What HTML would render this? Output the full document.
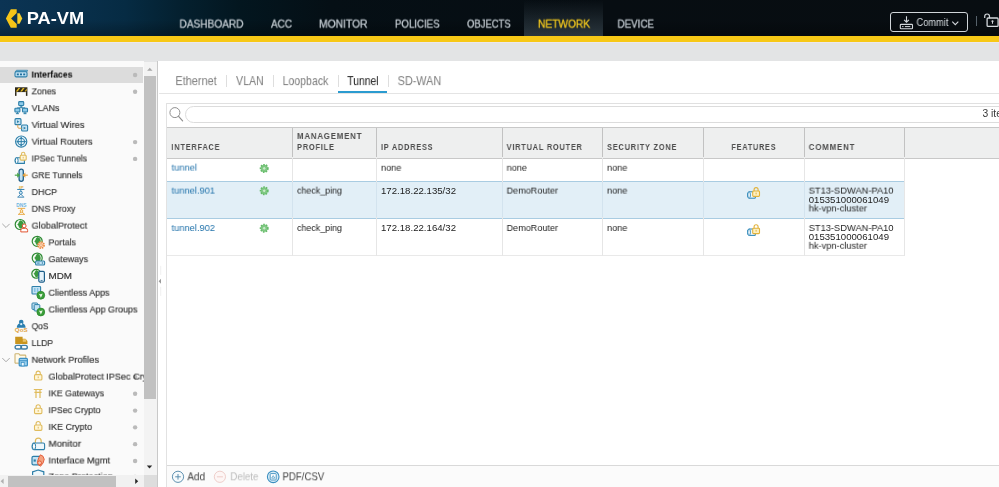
<!DOCTYPE html>
<html lang="en">
<head>
<meta charset="utf-8">
<title>PA-VM</title>
<style>
html,body{margin:0;padding:0;}
body{width:999px;height:487px;overflow:hidden;position:relative;background:#fff;font-family:"Liberation Sans",sans-serif;}
.abs{position:absolute;}
.t{will-change:transform;position:absolute;white-space:nowrap;transform-origin:0 0;}
#hdr{left:0;top:0;width:999px;height:36px;background:#070d12;overflow:hidden;}
#hdr .g{left:0;top:0;width:999px;height:36px;background:linear-gradient(180deg,rgba(0,0,0,0) 0%,rgba(0,0,0,0) 55%,rgba(0,0,0,.28) 100%),linear-gradient(90deg,#0b3454 0px,#09304c 70px,#062b43 125px,#04202f 180px,#03161f 240px,#050f15 330px,#070d12 600px,#080d11 999px);}
#ybar{left:0;top:36px;width:999px;height:6px;background:#f7c816;}
#gband{left:0;top:42px;width:999px;height:20px;background:#e3e4e5;}
#side{left:0;top:61.1px;width:144px;height:414.5px;background:#fafafa;overflow:hidden;}
#main{left:157.2px;top:61.1px;width:842px;height:426px;background:#fff;border-left:1px solid #c9c9c9;}
</style>
</head>
<body>
<div id="hdr" class="abs"><div class="g abs"></div>
<div class="abs" style="left:524px;top:0;width:79px;height:36px;background:linear-gradient(180deg,rgba(60,75,84,0) 0%,rgba(60,75,84,0.25) 40%,rgba(64,80,90,0.62) 100%)"></div>
<div class="abs" style="left:890.2px;top:12.4px;width:75.4px;height:17.2px;border:1.4px solid #d0d5d9;border-radius:3px"></div><div class="abs" style="left:976.4px;top:15.6px;width:1px;height:10.6px;background:#56616a"></div><svg class="abs" style="left:0;top:0" width="999" height="36" viewBox="0 0 999 36"><g transform="translate(5 8)"><path d="M5.8 1.2h5.9v3.9l-5.6 5.4l5.6 5.4v3.9h-5.9l-4.9-9.3z" fill="#f5c518"/><path d="M12.3 5.3h2.3l2.7 5.2l-2.7 5.3h-2.3z" fill="#f7d02c"/></g>
<g transform="translate(899.5 15.6)"><path d="M7 .6v5.8M4.6 4.2l2.4 2.4l2.4-2.4" fill="none" stroke="#d4d8dc" stroke-width="1.1"/><rect x=".8" y="8.8" width="12.2" height="4.4" rx=".8" fill="none" stroke="#d4d8dc" stroke-width="1.1"/><path d="M2.6 11h1.4M5.4 11h5.4" stroke="#d4d8dc" stroke-width="1"/></g>
<g transform="translate(951.5 20.6)"><path d="M.8 1l3 3l3-3" fill="none" stroke="#d4d8dc" stroke-width="1.1"/></g>
<g transform="translate(983.5 12.6)"><path d="M1.2 5.4v-1.6a2.4 2.4 0 0 1 4.8 0v1.8" fill="none" stroke="#d4d8dc" stroke-width="1.2"/><rect x="3.6" y="5.4" width="11" height="8.4" rx="1" fill="none" stroke="#d4d8dc" stroke-width="1.3"/><path d="M9 7.6a1 1 0 0 1 .5 1.9v1.7h-1v-1.7a1 1 0 0 1 .5-1.9z" fill="#d4d8dc"/></g></svg>
</div>
<div id="ybar" class="abs"></div>
<div id="gband" class="abs"></div>
<div class="abs" style="left:0;top:42px;width:999px;height:1.3px;background:#ebe7ee"></div>
<div id="side" class="abs">
<div class="abs" style="left:0;top:5.5px;width:143px;height:16.2px;background:#dcdcdc"></div>
</div>
<div class="abs" style="left:0;top:0;width:143.5px;height:475.4px;overflow:hidden">
<svg class="abs" style="left:0;top:0" width="143.5" height="475.4" viewBox="0 0 143.5 475.4"><g transform="translate(14.2 67.5)"><path d="M2.2 2.8h11.2l-.8 1.6h-11.6z" fill="#9fd0ea" stroke="#2d7fa9" stroke-width=".8"/><rect x=".8" y="4.2" width="12" height="5.2" rx="1.2" fill="#c3e2f3" stroke="#2d7fa9" stroke-width="1.1"/><rect x="2.6" y="6" width="2" height="1.8" fill="#1f6f9f"/><rect x="5.8" y="6" width="2" height="1.8" fill="#1f6f9f"/><rect x="9" y="6" width="2" height="1.8" fill="#1f6f9f"/></g>
<circle cx="135.1" cy="75.00" r="2.2" fill="#bababa"/>
<g transform="translate(14.2 84.28)"><rect x=".8" y="3" width="12.4" height="4.8" fill="#2f2a1c"/><path d="M1.6 7.2l2.6-3.6h1.8l-2.6 3.6zM6 7.2l2.6-3.6h1.8l-2.6 3.6zM10.4 7.2l2.2-3v2l-.8 1z" fill="#e3b822"/><rect x=".8" y="7.8" width="1.5" height="3.8" fill="#2f2a1c"/><rect x="11.7" y="7.8" width="1.5" height="3.8" fill="#2f2a1c"/></g>
<circle cx="135.1" cy="91.78" r="2.2" fill="#bababa"/>
<g transform="translate(14.2 101.06)"><rect x="4.5" y="0.6" width="5" height="3.8" rx=".8" fill="#8ecbea" stroke="#2d7fa9" stroke-width="1.1"/><path d="M5.5 6.0h3M7.0 4.3999999999999995v1.6" stroke="#2d7fa9" stroke-width="1"/><rect x="0.7" y="7.2" width="5" height="3.8" rx=".8" fill="#8ecbea" stroke="#2d7fa9" stroke-width="1.1"/><path d="M1.7 12.600000000000001h3M3.2 11.0v1.6" stroke="#2d7fa9" stroke-width="1"/><rect x="8.3" y="7.2" width="5" height="3.8" rx=".8" fill="#8ecbea" stroke="#2d7fa9" stroke-width="1.1"/><path d="M9.3 12.600000000000001h3M10.8 11.0v1.6" stroke="#2d7fa9" stroke-width="1"/><path d="M7 6v1.2M3.2 7.2V6.6h7.6v.6" fill="none" stroke="#2d7fa9" stroke-width=".7"/></g>
<g transform="translate(14.2 117.84)"><rect x=".8" y=".8" width="6" height="6" rx="1" fill="#c3e2f3" stroke="#2d7fa9" stroke-width="1.1"/><path d="M2.8 2.4l2.4 1.4l-2.4 1.4z" fill="#2d7fa9"/><rect x="7.4" y="7.2" width="6" height="6" rx="1" fill="#c3e2f3" stroke="#2d7fa9" stroke-width="1.1"/><path d="M9.4 8.8l2.4 1.4l-2.4 1.4z" fill="#2d7fa9"/><path d="M3.6 6.8v2.4a1.2 1.2 0 0 0 1.2 1.2h2.6" fill="none" stroke="#dda14a" stroke-width="1"/></g>
<g transform="translate(14.2 134.62)"><circle cx="7" cy="7" r="5.6" fill="#e6f3fa" stroke="#2d7fa9" stroke-width="1.2"/><circle cx="7" cy="7" r="3.4" fill="none" stroke="#2d7fa9" stroke-width=".9"/><path d="M7 2.6v8.8M2.6 7h8.8" stroke="#2d7fa9" stroke-width="1"/><path d="M7 2.2l1.4 1.9h-2.8zM7 11.8l1.4-1.9h-2.8zM2.2 7l1.9-1.4v2.8zM11.8 7l-1.9-1.4v2.8z" fill="#2d7fa9"/></g>
<circle cx="135.1" cy="142.12" r="2.2" fill="#bababa"/>
<g transform="translate(14.2 151.4)"><path d="M2.4 6.4h7.8v5.6h-7.8a1.5 2.8 0 0 1 0-5.6z" fill="#e6f3fa" stroke="#2d7fa9" stroke-width="1.1"/><ellipse cx="2.5" cy="9.2" rx="1.4" ry="2.8" fill="#fff" stroke="#2d7fa9" stroke-width="1"/><path d="M7.3 3.9v-1.3a1.7 1.7 0 0 1 3.4 0v1.3" fill="none" stroke="#e0bc5e" stroke-width="1.1"/><rect x="6" y="3.9" width="6" height="4.8" rx=".9" fill="#fff6d8" stroke="#e0bc5e" stroke-width="1.1"/><rect x="8.5" y="5.4" width="1" height="1.7" fill="#e0bc5e"/></g>
<circle cx="135.1" cy="158.90" r="2.2" fill="#bababa"/>
<g transform="translate(14.2 168.18)"><rect x="4.9" y=".9" width="4.2" height="12.2" rx="2.1" fill="#bfe0f2" stroke="#1f5d86" stroke-width="1.3"/><path d="M.6 7h4" stroke="#4aa54c" stroke-width="1.2"/><path d="M6 7l-3-2.6v5.2z" fill="#4aa54c"/><path d="M13.6 7h-3.6" stroke="#e9a440" stroke-width="1.2"/><path d="M8.2 7l3-2.6v5.2z" fill="#e9a440"/></g>
<g transform="translate(14.2 184.96)"><text x="4.9" y="3.6" font-family="Liberation Sans, sans-serif" font-size="4.2" font-weight="700" fill="#e3ad3c" textLength="4.4" lengthAdjust="spacingAndGlyphs">IP</text><path d="M3 4.5h7.2M6.6 4.5v1.8M3.2 12.2h6.8M4 11.8l2.6-2.6l2.6 2.6" fill="none" stroke="#3b86b4" stroke-width="1"/><circle cx="6.6" cy="7.8" r="1.5" fill="#d6ebf7" stroke="#3b86b4" stroke-width="1"/></g>
<g transform="translate(14.2 201.74)"><text x="2" y="5" font-family="Liberation Sans, sans-serif" font-size="4.6" font-weight="700" fill="#6fb4de" textLength="10.2" lengthAdjust="spacingAndGlyphs">DNS</text><path d="M3.6 6.6h7.4M7.3 6.6v1.6M3.8 12.6h7M4.6 12.2l2.7-2.4l2.7 2.4" fill="none" stroke="#e9ab45" stroke-width="1"/><circle cx="7.3" cy="9.2" r="1.3" fill="#fdf0d2" stroke="#e9ab45" stroke-width="1"/></g>
<g transform="translate(14.2 218.52)"><circle cx="6" cy="6" r="5" fill="#f4fbf2" stroke="#2f8a35" stroke-width="1.2"/><path d="M6.5 1.75a4.5 4.5 0 0 1 0 8.5c-2.5 -1.0 -1.5 -3.5 -3.75 -4.25c2.25 -0.75 1.25 -3.25 3.75 -4.25z" fill="#3b9a3f"/><circle cx="10" cy="7.4" r="1.9" fill="#fff" stroke="#e2522f" stroke-width="1"/><path d="M6.6 13.4v-1.6a2 2 0 0 1 2-2h2.8a2 2 0 0 1 2 2v1.6z" fill="#fff" stroke="#e2522f" stroke-width="1"/></g>
<g transform="translate(31.2 235.3)"><circle cx="6" cy="6" r="5" fill="#f4fbf2" stroke="#2f8a35" stroke-width="1.2"/><path d="M6.5 1.75a4.5 4.5 0 0 1 0 8.5c-2.5 -1.0 -1.5 -3.5 -3.75 -4.25c2.25 -0.75 1.25 -3.25 3.75 -4.25z" fill="#3b9a3f"/><circle cx="9.8" cy="9.8" r="3.1" fill="#fbd3bd" stroke="#ec8a3a" stroke-width="1.6" stroke-dasharray="1.5 .9"/><circle cx="9.8" cy="9.8" r="1.3" fill="#fff" stroke="#ec8a3a" stroke-width=".8"/></g>
<g transform="translate(31.2 252.08)"><circle cx="6" cy="6" r="5" fill="#f4fbf2" stroke="#2f8a35" stroke-width="1.2"/><path d="M6.5 1.75a4.5 4.5 0 0 1 0 8.5c-2.5 -1.0 -1.5 -3.5 -3.75 -4.25c2.25 -0.75 1.25 -3.25 3.75 -4.25z" fill="#3b9a3f"/><rect x="4.4" y="9" width="9" height="4" rx="1" fill="#c3e2f3" stroke="#2d7fa9" stroke-width="1.1"/><path d="M6 11h2.4" stroke="#2d7fa9" stroke-width="1"/><circle cx="11.2" cy="11" r=".7" fill="#2d7fa9"/></g>
<g transform="translate(31.2 268.86)"><circle cx="5" cy="5" r="4.4" fill="#f4fbf2" stroke="#2f8a35" stroke-width="1.2"/><path d="M5.44 1.2599999999999998a3.9600000000000004 3.9600000000000004 0 0 1 0 7.48c-2.2 -0.8800000000000001 -1.32 -3.08 -3.3000000000000003 -3.74c1.9800000000000002 -0.66 1.1 -2.8600000000000003 3.3000000000000003 -3.74z" fill="#3b9a3f"/><rect x="7.6" y="2.6" width="5.6" height="10.6" rx="1.2" fill="#e6f3fa" stroke="#1d5f8a" stroke-width="1.2"/><path d="M9.4 11.6h2" stroke="#1d5f8a" stroke-width=".8"/></g>
<g transform="translate(31.2 285.64)"><rect x=".8" y=".8" width="8.6" height="7.6" rx=".8" fill="#c3e2f3" stroke="#2d7fa9" stroke-width="1.1"/><path d="M3.6 2.4v4M6.4 2.4v4" stroke="#7fbfe3" stroke-width="1.4"/><circle cx="9.6" cy="9.6" r="3.9" fill="#3a9e3a" stroke="#2c8a2c" stroke-width=".8"/><path d="M7.6 8.2l2 .4l1.8-.8l-.6 2l-1.2 2.2l-.8-2z" fill="#eaf7e6"/></g>
<g transform="translate(31.2 302.42)"><rect x=".8" y=".6" width="5.6" height="6.4" rx=".8" fill="#c3e2f3" stroke="#2d7fa9" stroke-width="1"/><rect x="3" y="2.2" width="5.6" height="6.4" rx=".8" fill="#c3e2f3" stroke="#2d7fa9" stroke-width="1"/><circle cx="9.6" cy="9.6" r="3.9" fill="#3a9e3a" stroke="#2c8a2c" stroke-width=".8"/><path d="M7.6 8.2l2 .4l1.8-.8l-.6 2l-1.2 2.2l-.8-2z" fill="#eaf7e6"/></g>
<g transform="translate(14.2 319.2)"><circle cx="7" cy="2.8" r="2.3" fill="#2a7fb0"/><path d="M2.6 8.6c0-3.4 2-4.6 4.4-4.6s4.4 1.2 4.4 4.6z" fill="#2a7fb0"/><circle cx="7" cy="5" r="1.1" fill="#d8edf8"/><text x=".6" y="12.4" font-family="Liberation Sans, sans-serif" font-size="5.6" font-weight="700" fill="#e0a447" textLength="12.8" lengthAdjust="spacingAndGlyphs">QoS</text></g>
<g transform="translate(14.2 335.98)"><path d="M1 .8h7.4v2h2.8l2 2.2v3h-12.2z" fill="#c9951f"/><rect x="8.6" y="3.2" width="3.4" height="2.6" fill="#e9c46a"/><rect x=".9" y="9.4" width="6.4" height="3.6" rx="1.8" fill="none" stroke="#3f7fa6" stroke-width="1.4"/><rect x="6.7" y="9.4" width="6.4" height="3.6" rx="1.8" fill="none" stroke="#3f7fa6" stroke-width="1.4"/></g>
<g transform="translate(14.2 352.76)"><path d="M.8 10.4v-8.6a.8 .8 0 0 1 .8-.8h3l1.2 1.4h5a.8 .8 0 0 1 .8.8v2" fill="#fffaea" stroke="#cdb472" stroke-width="1.1"/><path d="M.8 10.4h4" stroke="#cdb472" stroke-width="1.1"/><rect x="5" y="5.6" width="8.2" height="7.6" rx="1" fill="#9ad0ee" stroke="#3a8fc4" stroke-width="1.2"/><path d="M5 8h8.2" stroke="#3a8fc4" stroke-width="1"/><rect x="7" y="9.6" width="3" height="3.6" fill="#eef8fd" stroke="#3a8fc4" stroke-width=".8"/></g>
<g transform="translate(31.2 369.54)"><path d="M4.9 5.1000000000000005v-1.4a2.1 2.1 0 0 1 4.2 0v1.4" fill="none" stroke="#e0bc5e" stroke-width="1.1"/><rect x="3.3" y="5.1000000000000005" width="7.4" height="5.4" rx="1" fill="#fff6d8" stroke="#e0bc5e" stroke-width="1.1"/><rect x="6.5" y="6.9" width="1" height="1.8" fill="#e0bc5e"/></g>
<circle cx="135.1" cy="377.04" r="2.2" fill="#bababa"/>
<g transform="translate(31.2 386.32)"><path d="M2.6 3.2h8.4M3.2 6h7.2M4.8 3.2v8.4M8.8 3.2v8.4" fill="none" stroke="#e0bc5e" stroke-width="1.2"/></g>
<circle cx="135.1" cy="393.82" r="2.2" fill="#bababa"/>
<g transform="translate(31.2 403.1)"><path d="M4.9 5.1000000000000005v-1.4a2.1 2.1 0 0 1 4.2 0v1.4" fill="none" stroke="#e0bc5e" stroke-width="1.1"/><rect x="3.3" y="5.1000000000000005" width="7.4" height="5.4" rx="1" fill="#fff6d8" stroke="#e0bc5e" stroke-width="1.1"/><rect x="6.5" y="6.9" width="1" height="1.8" fill="#e0bc5e"/></g>
<circle cx="135.1" cy="410.60" r="2.2" fill="#bababa"/>
<g transform="translate(31.2 419.88)"><path d="M4.9 5.1000000000000005v-1.4a2.1 2.1 0 0 1 4.2 0v1.4" fill="none" stroke="#e0bc5e" stroke-width="1.1"/><rect x="3.3" y="5.1000000000000005" width="7.4" height="5.4" rx="1" fill="#fff6d8" stroke="#e0bc5e" stroke-width="1.1"/><rect x="6.5" y="6.9" width="1" height="1.8" fill="#e0bc5e"/></g>
<circle cx="135.1" cy="427.38" r="2.2" fill="#bababa"/>
<g transform="translate(31.2 436.66)"><path d="M4.2 6.4v-2a2.9 2.9 0 0 1 5.8 0v2" fill="none" stroke="#e0bc5e" stroke-width="1.2"/><path d="M2.6 6.4h9.4a1.4 1.4 0 0 1 1.4 1.4v3.8a1.4 1.4 0 0 1-1.4 1.4h-9.4a1.7 3.3 0 0 1 0-6.6z" fill="#eef7fc" stroke="#2d7fa9" stroke-width="1.1"/><ellipse cx="2.8" cy="9.7" rx="1.6" ry="3.3" fill="#fff" stroke="#2d7fa9" stroke-width="1"/></g>
<circle cx="135.1" cy="444.16" r="2.2" fill="#bababa"/>
<g transform="translate(31.2 453.44)"><rect x=".8" y="3" width="9" height="8.4" rx="1.4" fill="#c3e2f3" stroke="#2d7fa9" stroke-width="1.2"/><rect x="2.4" y="6" width="2.2" height="2.2" fill="#2d7fa9"/><path d="M9.2 1.4l2.6 1.4l1.2 3l-1 3.6l-2.6 3.4l-2.4-1.6l-.6-3.4l1.2-3.6z" fill="#f4a27f" stroke="#e2522f" stroke-width=".9"/><circle cx="8.4" cy="9.4" r="1.9" fill="#f9c4ab" stroke="#e2522f" stroke-width=".9"/></g>
<circle cx="135.1" cy="460.94" r="2.2" fill="#bababa"/>
<g transform="translate(31.2 469.42)"><path d="M1.4 2.4l5.6-1.8l5.6 1.8v4.6c0 3.4-2.6 5.4-5.6 6.4c-3-1-5.6-3-5.6-6.4z" fill="#eef7fc" stroke="#2d7fa9" stroke-width="1.2"/></g>
<circle cx="135.1" cy="476.92" r="2.2" fill="#bababa"/>
<g transform="translate(1.5 223.02)"><path d="M.8 .8l3.7 3.7l3.7-3.7" fill="none" stroke="#a8a8a8" stroke-width="1"/></g>
<g transform="translate(1.5 357.26)"><path d="M.8 .8l3.7 3.7l3.7-3.7" fill="none" stroke="#a8a8a8" stroke-width="1"/></g></svg>
<span class="t" style="left:31px;top:68px;font-size:9.7px;line-height:13px;color:#000;transform:translate(0.60px,-0.45px) scaleX(0.8912);font-weight:700">Interfaces</span>
<span class="t" style="left:31px;top:84px;font-size:9.8px;line-height:13px;color:#333;transform:translate(0.60px,0.33px) scaleX(0.8959);-webkit-text-stroke:0.18px #333">Zones</span>
<span class="t" style="left:31px;top:101px;font-size:9.8px;line-height:13px;color:#333;transform:translate(0.60px,0.11px) scaleX(0.9148);-webkit-text-stroke:0.18px #333">VLANs</span>
<span class="t" style="left:31px;top:118px;font-size:9.8px;line-height:13px;color:#333;transform:translate(0.60px,-0.11px) scaleX(0.9556);-webkit-text-stroke:0.18px #333">Virtual Wires</span>
<span class="t" style="left:31px;top:135px;font-size:9.8px;line-height:13px;color:#333;transform:translate(0.60px,-0.33px) scaleX(0.9424);-webkit-text-stroke:0.18px #333">Virtual Routers</span>
<span class="t" style="left:31px;top:151px;font-size:9.8px;line-height:13px;color:#333;transform:translate(0.60px,0.45px) scaleX(0.8768);-webkit-text-stroke:0.18px #333">IPSec Tunnels</span>
<span class="t" style="left:31px;top:168px;font-size:9.8px;line-height:13px;color:#333;transform:translate(0.60px,0.23px) scaleX(0.8736);-webkit-text-stroke:0.18px #333">GRE Tunnels</span>
<span class="t" style="left:31px;top:185px;font-size:9.8px;line-height:13px;color:#333;transform:translate(0.60px,0.01px) scaleX(0.9148);-webkit-text-stroke:0.18px #333">DHCP</span>
<span class="t" style="left:31px;top:202px;font-size:9.8px;line-height:13px;color:#333;transform:translate(0.60px,-0.21px) scaleX(0.9060);-webkit-text-stroke:0.18px #333">DNS Proxy</span>
<span class="t" style="left:31px;top:219px;font-size:9.8px;line-height:13px;color:#333;transform:translate(0.60px,-0.43px) scaleX(0.9333);-webkit-text-stroke:0.18px #333">GlobalProtect</span>
<span class="t" style="left:48px;top:235px;font-size:9.8px;line-height:13px;color:#333;transform:translate(0.50px,0.35px) scaleX(0.9016);-webkit-text-stroke:0.18px #333">Portals</span>
<span class="t" style="left:48px;top:252px;font-size:9.8px;line-height:13px;color:#333;transform:translate(0.50px,0.13px) scaleX(0.9067);-webkit-text-stroke:0.18px #333">Gateways</span>
<span class="t" style="left:48px;top:269px;font-size:9.8px;line-height:13px;color:#333;transform:translate(0.50px,-0.09px) scaleX(1.0040);-webkit-text-stroke:0.18px #333">MDM</span>
<span class="t" style="left:48px;top:286px;font-size:9.8px;line-height:13px;color:#333;transform:translate(0.50px,-0.31px) scaleX(0.9107);-webkit-text-stroke:0.18px #333">Clientless Apps</span>
<span class="t" style="left:48px;top:302px;font-size:9.8px;line-height:13px;color:#333;transform:translate(0.50px,0.47px) scaleX(0.9181);-webkit-text-stroke:0.18px #333">Clientless App Groups</span>
<span class="t" style="left:31px;top:319px;font-size:9.8px;line-height:13px;color:#333;transform:translate(0.60px,0.25px) scaleX(0.8618);-webkit-text-stroke:0.18px #333">QoS</span>
<span class="t" style="left:31px;top:336px;font-size:9.8px;line-height:13px;color:#333;transform:translate(0.60px,0.03px) scaleX(0.8729);-webkit-text-stroke:0.18px #333">LLDP</span>
<span class="t" style="left:31px;top:353px;font-size:9.8px;line-height:13px;color:#333;transform:translate(0.60px,-0.19px) scaleX(0.9449);-webkit-text-stroke:0.18px #333">Network Profiles</span>
<span class="t" style="left:48px;top:370px;font-size:9.8px;line-height:13px;color:#333;transform:translate(0.50px,-0.41px) scaleX(0.9300);-webkit-text-stroke:0.18px #333">GlobalProtect IPSec Crypto</span>
<span class="t" style="left:48px;top:386px;font-size:9.8px;line-height:13px;color:#333;transform:translate(0.50px,0.37px) scaleX(0.8940);-webkit-text-stroke:0.18px #333">IKE Gateways</span>
<span class="t" style="left:48px;top:403px;font-size:9.8px;line-height:13px;color:#333;transform:translate(0.50px,0.15px) scaleX(0.9009);-webkit-text-stroke:0.18px #333">IPSec Crypto</span>
<span class="t" style="left:48px;top:420px;font-size:9.8px;line-height:13px;color:#333;transform:translate(0.50px,-0.07px) scaleX(0.9182);-webkit-text-stroke:0.18px #333">IKE Crypto</span>
<span class="t" style="left:48px;top:437px;font-size:9.8px;line-height:13px;color:#333;transform:translate(0.50px,-0.29px) scaleX(0.9947);-webkit-text-stroke:0.18px #333">Monitor</span>
<span class="t" style="left:48px;top:453px;font-size:9.8px;line-height:13px;color:#333;transform:translate(0.50px,0.49px) scaleX(0.9412);-webkit-text-stroke:0.18px #333">Interface Mgmt</span>
<span class="t" style="left:48px;top:469px;font-size:9.8px;line-height:13px;color:#333;transform:translate(0.50px,0.47px) scaleX(0.9300);-webkit-text-stroke:0.18px #333">Zone Protection</span>
</div>
<div class="abs" style="left:144px;top:61.6px;width:13.5px;height:413.8px;background:#f3f3f3"></div>
<div class="abs" style="left:144px;top:75.8px;width:11.5px;height:323px;background:#c1c1c1"></div>
<div class="abs" style="left:0;top:475.4px;width:143.5px;height:11.6px;background:#f1f1f1"></div>
<div class="abs" style="left:143.6px;top:475.4px;width:13.6px;height:11.6px;background:#dddddd"></div>
<div class="abs" style="left:8px;top:476.4px;width:107.5px;height:10.6px;background:#c1c1c1"></div>
<div id="main" class="abs"></div>
<div class="abs" style="left:225.5px;top:75.4px;width:1px;height:11.399999999999991px;background:#dedede"></div>
<div class="abs" style="left:273.1px;top:75.4px;width:1px;height:11.399999999999991px;background:#dedede"></div>
<div class="abs" style="left:337.7px;top:75.4px;width:1px;height:11.399999999999991px;background:#dedede"></div>
<div class="abs" style="left:387.5px;top:75.4px;width:1px;height:11.399999999999991px;background:#dedede"></div>
<div class="abs" style="left:158.5px;top:93.4px;width:840.5px;height:1px;background:#e4e4e4"></div>
<div class="abs" style="left:337.6px;top:91.4px;width:49.39999999999998px;height:2.1px;background:#2a9bd0"></div>
<div class="abs" style="left:166.4px;top:102.7px;width:832.6px;height:1px;background:#e0e0e0"></div>
<div class="abs" style="left:166.4px;top:102.7px;width:1px;height:384.3px;background:#e2e2e2"></div>
<div class="abs" style="left:185px;top:105.6px;width:840px;height:15.8px;border:1px solid #dcdcdc;border-radius:9px;background:#fff"></div>
<div class="abs" style="left:167.4px;top:127px;width:832px;height:29.7px;background:#eeefef;border-top:1px solid #c8c8c8;border-bottom:1px solid #c8c8c8"></div>
<div class="abs" style="left:291.5px;top:128px;width:1px;height:29px;background:#c2c2c2"></div>
<div class="abs" style="left:375.5px;top:128px;width:1px;height:29px;background:#c2c2c2"></div>
<div class="abs" style="left:501.5px;top:128px;width:1px;height:29px;background:#c2c2c2"></div>
<div class="abs" style="left:602.1px;top:128px;width:1px;height:29px;background:#c2c2c2"></div>
<div class="abs" style="left:702.5px;top:128px;width:1px;height:29px;background:#c2c2c2"></div>
<div class="abs" style="left:803.5px;top:128px;width:1px;height:29px;background:#c2c2c2"></div>
<div class="abs" style="left:903.9px;top:128px;width:1px;height:29px;background:#c2c2c2"></div>
<div class="abs" style="left:167.4px;top:181.4px;width:737px;height:35.4px;background:#e2eff7;border-top:1px solid #a9cce2;border-bottom:1px solid #a9cce2"></div>
<div class="abs" style="left:167.4px;top:255px;width:737.0px;height:1px;background:#e9e9e9"></div>
<div class="abs" style="left:291.5px;top:158px;width:1px;height:97.5px;background:#e6e6e6"></div>
<div class="abs" style="left:375.5px;top:158px;width:1px;height:97.5px;background:#e6e6e6"></div>
<div class="abs" style="left:501.5px;top:158px;width:1px;height:97.5px;background:#e6e6e6"></div>
<div class="abs" style="left:602.1px;top:158px;width:1px;height:97.5px;background:#e6e6e6"></div>
<div class="abs" style="left:702.5px;top:158px;width:1px;height:97.5px;background:#e6e6e6"></div>
<div class="abs" style="left:803.5px;top:158px;width:1px;height:97.5px;background:#e6e6e6"></div>
<div class="abs" style="left:903.9px;top:158px;width:1px;height:97.5px;background:#e6e6e6"></div>
<div class="abs" style="left:291.5px;top:182.4px;width:1px;height:34.400000000000006px;background:#d3e3ee"></div>
<div class="abs" style="left:375.5px;top:182.4px;width:1px;height:34.400000000000006px;background:#d3e3ee"></div>
<div class="abs" style="left:501.5px;top:182.4px;width:1px;height:34.400000000000006px;background:#d3e3ee"></div>
<div class="abs" style="left:602.1px;top:182.4px;width:1px;height:34.400000000000006px;background:#d3e3ee"></div>
<div class="abs" style="left:702.5px;top:182.4px;width:1px;height:34.400000000000006px;background:#d3e3ee"></div>
<div class="abs" style="left:803.5px;top:182.4px;width:1px;height:34.400000000000006px;background:#d3e3ee"></div>
<div class="abs" style="left:167.4px;top:465.1px;width:831.6px;height:1px;background:#d9d9d9"></div>
<div class="abs" style="left:167.4px;top:466.1px;width:832px;height:20.9px;background:#fbfbfb"></div>
<svg class="abs" style="left:0;top:0" width="999" height="487" viewBox="0 0 999 487"><g transform="translate(146.9 67.4)"><path d="M.2 3.4l2.7-3l2.7 3z" fill="#a8a8a8"/></g>
<g transform="translate(146.6 465.2)"><path d="M.2 .3l2.7 3l2.7-3z" fill="#2a2a2a"/></g>
<g transform="translate(0.2 478.4)"><path d="M3.4 .2l-3 2.7l3 2.7z" fill="#b0b0b0"/></g>
<g transform="translate(134.8 478.4)"><path d="M.4 .2l3 2.7l-3 2.7z" fill="#2a2a2a"/></g>
<g transform="translate(157.8 277.9)"><path d="M3.2 .8l-2.4 2.5l2.4 2.5z" fill="#9a9a9a"/><path d="M2.9 -12v9M2.9 9v9" stroke="#ececec" stroke-width=".8"/></g>
<g transform="translate(168.5 106)"><circle cx="6.4" cy="6.6" r="5" fill="none" stroke="#8f8f8f" stroke-width="1"/><path d="M10.1 10.4l4 4.4" stroke="#8f8f8f" stroke-width="1.2" stroke-linecap="round"/></g>
<g transform="translate(259.2 163.39999999999998)"><circle cx="5" cy="5" r="3.6" fill="#86cc89" stroke="#66bb6a" stroke-width="1.8" stroke-dasharray="1.5 1.1"/><circle cx="5" cy="5" r="1.7" fill="#c9ebca" stroke="#5fb463" stroke-width=".5"/></g>
<g transform="translate(259.2 185.79999999999998)"><circle cx="5" cy="5" r="3.6" fill="#86cc89" stroke="#66bb6a" stroke-width="1.8" stroke-dasharray="1.5 1.1"/><circle cx="5" cy="5" r="1.7" fill="#c9ebca" stroke="#5fb463" stroke-width=".5"/></g>
<g transform="translate(259.2 223.2)"><circle cx="5" cy="5" r="3.6" fill="#86cc89" stroke="#66bb6a" stroke-width="1.8" stroke-dasharray="1.5 1.1"/><circle cx="5" cy="5" r="1.7" fill="#c9ebca" stroke="#5fb463" stroke-width=".5"/></g>
<g transform="translate(746.5 186.2)"><path d="M2.4 5.6h6.4v6.4h-6.4a1.4 3.2 0 0 1 0-6.4z" fill="#eef7fc" stroke="#2b86b8" stroke-width="1"/><ellipse cx="2.6" cy="8.8" rx="1.3" ry="3.2" fill="#fff" stroke="#2b86b8" stroke-width=".9"/><path d="M7.6 4.8v-1.4a2 2 0 0 1 4 0v1.4" fill="none" stroke="#e2b23a" stroke-width="1.1"/><rect x="6.2" y="4.8" width="6.8" height="5.4" rx=".9" fill="#fdf0c2" stroke="#e2b23a" stroke-width="1.1"/><rect x="9.1" y="6.4" width="1" height="1.8" fill="#e2b23a"/></g>
<g transform="translate(746.5 223.4)"><path d="M2.4 5.6h6.4v6.4h-6.4a1.4 3.2 0 0 1 0-6.4z" fill="#eef7fc" stroke="#2b86b8" stroke-width="1"/><ellipse cx="2.6" cy="8.8" rx="1.3" ry="3.2" fill="#fff" stroke="#2b86b8" stroke-width=".9"/><path d="M7.6 4.8v-1.4a2 2 0 0 1 4 0v1.4" fill="none" stroke="#e2b23a" stroke-width="1.1"/><rect x="6.2" y="4.8" width="6.8" height="5.4" rx=".9" fill="#fdf0c2" stroke="#e2b23a" stroke-width="1.1"/><rect x="9.1" y="6.4" width="1" height="1.8" fill="#e2b23a"/></g>
<g transform="translate(171 469.8)"><circle cx="7" cy="7" r="5.6" fill="#f6fafc" stroke="#4f86a8" stroke-width=".9"/><path d="M7 4.2v5.6M4.2 7h5.6" stroke="#4f86a8" stroke-width=".9"/></g>
<g transform="translate(212.9 469.8)"><circle cx="7" cy="7" r="5.6" fill="#fdf6f5" stroke="#efcfcb" stroke-width="1"/><path d="M4 7h6" stroke="#efcfcb" stroke-width="1.1"/></g>
<g transform="translate(266.2 469.8)"><circle cx="7" cy="7" r="5.8" fill="#d8ecf7" stroke="#3b8fc0" stroke-width="1.1"/><rect x="4" y="3.8" width="6" height="6.4" rx=".8" fill="#fff" stroke="#3b8fc0" stroke-width=".9"/><path d="M5.4 8.4l1.6-2.6l1.6 2.6z" fill="none" stroke="#3b8fc0" stroke-width=".7"/></g></svg>
<span class="t" style="left:179px;top:17px;font-size:11px;line-height:14px;color:#c3cbd1;transform:translate(0.50px,-0.40px) scaleX(0.9184);-webkit-text-stroke:0.3px #c3cbd1">DASHBOARD</span>
<span class="t" style="left:271px;top:17px;font-size:11px;line-height:14px;color:#c3cbd1;transform:translate(0.00px,-0.40px) scaleX(0.9038);-webkit-text-stroke:0.3px #c3cbd1">ACC</span>
<span class="t" style="left:319px;top:17px;font-size:11px;line-height:14px;color:#c3cbd1;transform:translate(0.00px,-0.40px) scaleX(0.9372);-webkit-text-stroke:0.3px #c3cbd1">MONITOR</span>
<span class="t" style="left:395px;top:17px;font-size:11px;line-height:14px;color:#c3cbd1;transform:translate(0.00px,-0.40px) scaleX(0.8768);-webkit-text-stroke:0.3px #c3cbd1">POLICIES</span>
<span class="t" style="left:467px;top:17px;font-size:11px;line-height:14px;color:#c3cbd1;transform:translate(0.00px,-0.40px) scaleX(0.8574);-webkit-text-stroke:0.3px #c3cbd1">OBJECTS</span>
<span class="t" style="left:617px;top:17px;font-size:11px;line-height:14px;color:#c3cbd1;transform:translate(0.50px,-0.40px) scaleX(0.8909);-webkit-text-stroke:0.3px #c3cbd1">DEVICE</span>
<span class="t" style="left:538px;top:17px;font-size:11px;line-height:14px;color:#f2c81e;transform:translate(0.00px,-0.40px) scaleX(0.9247);-webkit-text-stroke:0.3px #f2c81e">NETWORK</span>
<span class="t" style="left:26px;top:8px;font-size:16.4px;line-height:20px;color:#ffffff;transform:translate(0.80px,0.20px) scaleX(1.1122);font-weight:700">PA-VM</span>
<span class="t" style="left:916px;top:16px;font-size:10px;line-height:13px;color:#d5dade;transform:translate(0.50px,0.00px) scaleX(0.9259)">Commit</span>
<span class="t" style="left:175px;top:73px;font-size:12.2px;line-height:16px;color:#7c7c7c;transform:translate(0.40px,0.10px) scaleX(0.8941)">Ethernet</span>
<span class="t" style="left:236px;top:73px;font-size:12.2px;line-height:16px;color:#7c7c7c;transform:translate(0.00px,0.10px) scaleX(0.8699)">VLAN</span>
<span class="t" style="left:282px;top:73px;font-size:12.2px;line-height:16px;color:#7c7c7c;transform:translate(0.60px,0.10px) scaleX(0.8646)">Loopback</span>
<span class="t" style="left:397px;top:73px;font-size:12.2px;line-height:16px;color:#7c7c7c;transform:translate(0.60px,0.10px) scaleX(0.8901)">SD-WAN</span>
<span class="t" style="left:347px;top:73px;font-size:12.2px;line-height:16px;color:#222222;transform:translate(0.20px,0.10px) scaleX(0.8557)">Tunnel</span>
<span class="t" style="left:982px;top:106px;font-size:10.3px;line-height:13px;color:#3a3a3a;transform:translate(0.40px,0.50px) scaleX(1.0000)">3 items</span>
<span class="t" style="left:171px;top:141px;font-size:9.2px;line-height:12px;color:#4e4e4e;transform:translate(0.50px,0.00px) scaleX(0.7990);font-weight:700;letter-spacing:1.0px">INTERFACE</span>
<span class="t" style="left:297px;top:130px;font-size:9.2px;line-height:12px;color:#4e4e4e;transform:translate(0.00px,0.00px) scaleX(0.8501);font-weight:700;letter-spacing:1.0px">MANAGEMENT</span>
<span class="t" style="left:297px;top:141px;font-size:9.2px;line-height:12px;color:#4e4e4e;transform:translate(0.00px,0.00px) scaleX(0.8074);font-weight:700;letter-spacing:1.0px">PROFILE</span>
<span class="t" style="left:381px;top:141px;font-size:9.2px;line-height:12px;color:#4e4e4e;transform:translate(0.00px,0.00px) scaleX(0.7965);font-weight:700;letter-spacing:1.0px">IP ADDRESS</span>
<span class="t" style="left:506px;top:141px;font-size:9.2px;line-height:12px;color:#4e4e4e;transform:translate(0.60px,0.00px) scaleX(0.8021);font-weight:700;letter-spacing:1.0px">VIRTUAL ROUTER</span>
<span class="t" style="left:607px;top:141px;font-size:9.2px;line-height:12px;color:#4e4e4e;transform:translate(0.00px,0.00px) scaleX(0.8046);font-weight:700;letter-spacing:1.0px">SECURITY ZONE</span>
<span class="t" style="left:731px;top:141px;font-size:9.2px;line-height:12px;color:#4e4e4e;transform:translate(0.50px,0.00px) scaleX(0.7879);font-weight:700;letter-spacing:1.0px">FEATURES</span>
<span class="t" style="left:808px;top:141px;font-size:9.2px;line-height:12px;color:#4e4e4e;transform:translate(0.70px,0.00px) scaleX(0.8566);font-weight:700;letter-spacing:1.0px">COMMENT</span>
<span class="t" style="left:171px;top:161px;font-size:9.5px;line-height:13px;color:#2273ab;transform:translate(0.50px,-0.40px) scaleX(0.9849)">tunnel</span>
<span class="t" style="left:171px;top:184px;font-size:9.5px;line-height:13px;color:#2273ab;transform:translate(0.50px,-0.40px) scaleX(0.9803)">tunnel.901</span>
<span class="t" style="left:171px;top:221px;font-size:9.5px;line-height:13px;color:#2273ab;transform:translate(0.50px,0.00px) scaleX(0.9803)">tunnel.902</span>
<span class="t" style="left:297px;top:184px;font-size:9.5px;line-height:13px;color:#1c1c1c;transform:translate(0.00px,-0.40px) scaleX(0.9363)">check_ping</span>
<span class="t" style="left:506px;top:184px;font-size:9.5px;line-height:13px;color:#1c1c1c;transform:translate(0.60px,-0.40px) scaleX(0.9543)">DemoRouter</span>
<span class="t" style="left:297px;top:221px;font-size:9.5px;line-height:13px;color:#1c1c1c;transform:translate(0.00px,0.00px) scaleX(0.9363)">check_ping</span>
<span class="t" style="left:506px;top:221px;font-size:9.5px;line-height:13px;color:#1c1c1c;transform:translate(0.60px,0.00px) scaleX(0.9543)">DemoRouter</span>
<span class="t" style="left:381px;top:184px;font-size:9.5px;line-height:13px;color:#1c1c1c;transform:translate(0.00px,-0.40px) scaleX(1.0139)">172.18.22.135/32</span>
<span class="t" style="left:381px;top:221px;font-size:9.5px;line-height:13px;color:#1c1c1c;transform:translate(0.00px,0.00px) scaleX(1.0139)">172.18.22.164/32</span>
<span class="t" style="left:381px;top:161px;font-size:9.5px;line-height:13px;color:#1c1c1c;transform:translate(0.00px,-0.20px) scaleX(0.9697)">none</span>
<span class="t" style="left:506px;top:161px;font-size:9.5px;line-height:13px;color:#1c1c1c;transform:translate(0.60px,-0.20px) scaleX(0.9697)">none</span>
<span class="t" style="left:607px;top:161px;font-size:9.5px;line-height:13px;color:#1c1c1c;transform:translate(0.00px,-0.20px) scaleX(0.9697)">none</span>
<span class="t" style="left:607px;top:184px;font-size:9.5px;line-height:13px;color:#1c1c1c;transform:translate(0.00px,-0.40px) scaleX(0.9697)">none</span>
<span class="t" style="left:808px;top:184px;font-size:9.5px;line-height:13px;color:#1c1c1c;transform:translate(0.70px,-0.40px) scaleX(0.9795)">ST13-SDWAN-PA10</span>
<span class="t" style="left:808px;top:192px;font-size:9.5px;line-height:13px;color:#1c1c1c;transform:translate(0.70px,0.50px) scaleX(1.0130)">015351000061049</span>
<span class="t" style="left:808px;top:201px;font-size:9.5px;line-height:13px;color:#1c1c1c;transform:translate(0.70px,0.40px) scaleX(0.9770)">hk-vpn-cluster</span>
<span class="t" style="left:607px;top:221px;font-size:9.5px;line-height:13px;color:#1c1c1c;transform:translate(0.00px,0.00px) scaleX(0.9697)">none</span>
<span class="t" style="left:808px;top:221px;font-size:9.5px;line-height:13px;color:#1c1c1c;transform:translate(0.70px,0.00px) scaleX(0.9795)">ST13-SDWAN-PA10</span>
<span class="t" style="left:808px;top:230px;font-size:9.5px;line-height:13px;color:#1c1c1c;transform:translate(0.70px,-0.10px) scaleX(1.0130)">015351000061049</span>
<span class="t" style="left:808px;top:239px;font-size:9.5px;line-height:13px;color:#1c1c1c;transform:translate(0.70px,-0.20px) scaleX(0.9770)">hk-vpn-cluster</span>
<span class="t" style="left:187px;top:470px;font-size:10.3px;line-height:13px;color:#444;transform:translate(0.40px,0.30px) scaleX(0.9712)">Add</span>
<span class="t" style="left:230px;top:470px;font-size:10.3px;line-height:13px;color:#bcbcbc;transform:translate(0.30px,0.30px) scaleX(0.9440)">Delete</span>
<span class="t" style="left:282px;top:470px;font-size:10.3px;line-height:13px;color:#444;transform:translate(0.50px,0.30px) scaleX(0.9341)">PDF/CSV</span>
</body>
</html>
